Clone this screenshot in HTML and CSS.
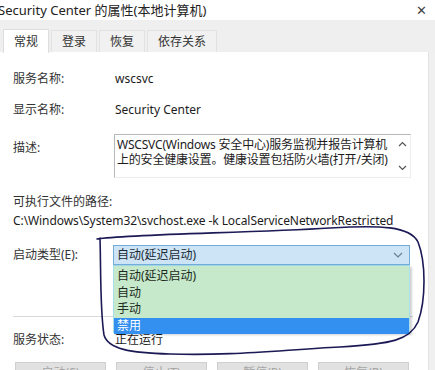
FILE: index.html
```html
<!DOCTYPE html>
<html lang="zh-CN">
<head>
<meta charset="utf-8">
<title>Security Center 的属性</title>
<link rel="stylesheet" href="styles.css">
</head>
<body>
<div class="window">
  <div class="titlebar">
    <span class="title">Security Center 的属性(本地计算机)</span>
    <span class="close">✕</span>
  </div>
  <div class="tabstrip">
    <div class="tab active">常规</div>
    <div class="tab">登录</div>
    <div class="tab">恢复</div>
    <div class="tab">依存关系</div>
  </div>
  <div class="panel">
    <div class="row r1"><span class="label">服务名称:</span><span class="value">wscsvc</span></div>
    <div class="row r2"><span class="label">显示名称:</span><span class="value">Security Center</span></div>
    <div class="row desc-row">
      <span class="label desc-label">描述:</span>
      <div class="descbox">
        <div class="desc-text">WSCSVC(Windows 安全中心)服务监视并报告计算机<br>上的安全健康设置。健康设置包括防火墙(打开/关闭)</div>
        <div class="scroll">
          <svg width="9" height="6" viewBox="0 0 9 6"><path d="M1 5 L4.5 1.5 L8 5" fill="none" stroke="#555" stroke-width="1.2"/></svg>
          <svg width="9" height="6" viewBox="0 0 9 6"><path d="M1 1 L4.5 4.5 L8 1" fill="none" stroke="#555" stroke-width="1.2"/></svg>
        </div>
      </div>
    </div>
    <div class="path-label">可执行文件的路径:</div>
    <div class="path">C:\Windows\System32\svchost.exe -k LocalServiceNetworkRestricted</div>
    <div class="row startup">
      <span class="label">启动类型(E):</span>
      <div class="combo-wrap">
        <div class="combo">
          <span>自动(延迟启动)</span>
          <svg width="10" height="6" viewBox="0 0 10 6"><path d="M1 1 L5 5 L9 1" fill="none" stroke="#6b7f8f" stroke-width="1.2"/></svg>
        </div>
        <ul class="dropdown">
          <li>自动(延迟启动)</li>
          <li>自动</li>
          <li>手动</li>
          <li class="sel">禁用</li>
        </ul>
      </div>
    </div>
    <div class="sep"></div>
    <div class="row status"><span class="label">服务状态:</span><span class="value">正在运行</span></div>
    <div class="buttons">
      <div class="btn">启动(S)</div>
      <div class="btn">停止(T)</div>
      <div class="btn">暂停(P)</div>
      <div class="btn">恢复(R)</div>
    </div>
  </div>
  <svg class="ink" width="435" height="370" viewBox="0 0 435 370">
    <path d="M97 239 C130 234, 250 233, 330 228 C380 225, 410 226, 418 242 C426 262, 426 300, 418 322 C410 340, 392 344, 340 347 C280 350, 230 356, 170 354 C130 353, 108 349, 104 335 C100 310, 101 272, 100 238" fill="none" stroke="#1b1a55" stroke-width="1.6" stroke-linecap="round"/>
  </svg>
</div>
</body>
</html>
```

FILE: styles.css
```css
html, body {
  margin: 0;
  padding: 0;
  background: #ffffff;
}
body {
  width: 435px;
  height: 370px;
  overflow: hidden;
  font-family: "Noto Sans", "Noto Sans CJK SC", sans-serif;
  font-size: 12px;
  color: #1c1c1c;
}
.window {
  position: relative;
  width: 435px;
  height: 370px;
  overflow: hidden;
  background: #f0f0f0;
}
.titlebar {
  height: 20px;
  background: #ffffff;
  display: flex;
  align-items: center;
  justify-content: space-between;
}
.title {
  margin-left: -2px;
  font-size: 13px;
  color: #222;
  line-height: 20px;
}
.close {
  margin-right: 8px;
  font-size: 13px;
  color: #444;
  font-family: "DejaVu Sans", sans-serif;
}
.tabstrip {
  height: 32px;
  background: #efefef;
  display: flex;
  align-items: flex-end;
  padding-left: 3px;
  box-sizing: border-box;
}
.tab {
  height: 21px;
  line-height: 21px;
  padding: 0 10px;
  margin-right: 2px;
  font-size: 12px;
  color: #333;
  border: 1px solid #e2e2e2;
  border-bottom: none;
  background: #f1f1f1;
}
.tab.active {
  height: 23px;
  line-height: 23px;
  background: #ffffff;
  border-color: #dedede;
  margin-bottom: -1px;
}
.panel {
  background: #ffffff;
  height: 318px;
  width: 429px;
  border-right: 1px solid #e3e3e3;
  box-sizing: border-box;
  padding: 19px 0 0 13px;
}
.row {
  display: flex;
  align-items: center;
  line-height: 16px;
}
.label {
  width: 102px;
  flex: none;
  color: #333;
}
.value {
  color: #1c1c1c;
}
.r2 {
  margin-top: 15px;
}
.desc-row {
  margin-top: 16px;
  align-items: flex-start;
}
.desc-label {
  margin-top: 6px;
}
.descbox {
  margin-left: -1px;
  width: 297px;
  height: 44px;
  box-sizing: border-box;
  border: 1px solid #b8b8b8;
  border-right-color: #ececec;
  border-bottom-color: #ececec;
  display: flex;
}
.desc-text {
  flex: 1;
  padding: 2px 0 0 2px;
  line-height: 15px;
  letter-spacing: -0.2px;
}
.scroll {
  width: 16px;
  display: flex;
  flex-direction: column;
  justify-content: space-between;
  align-items: center;
  padding: 6px 0 6px;
}
.path-label {
  margin-top: 16px;
  line-height: 16px;
  color: #333;
}
.path {
  margin-top: 3px;
  line-height: 16px;
  font-size: 12px;
  letter-spacing: -0.08px;
}
.startup {
  margin-top: 16px;
}
.combo-wrap {
  position: relative;
  margin-left: -2px;
}
.combo {
  width: 297px;
  height: 20px;
  box-sizing: border-box;
  background: #cce4f6;
  border: 1px solid #73acd8;
  display: flex;
  align-items: center;
  justify-content: space-between;
  padding: 0 6px 0 3px;
  color: #1c2a33;
}
.dropdown {
  position: absolute;
  top: 20px;
  left: 0;
  width: 297px;
  height: 68px;
  box-sizing: border-box;
  margin: 0;
  padding: 2px 0 0 0;
  list-style: none;
  background: #c6e9cc;
  border: 1px solid #a9dfe8;
  border-top-color: #9fd6e6;
  box-shadow: 2px 2px 2px rgba(0,0,0,0.18);
  z-index: 2;
}
.dropdown li {
  height: 16.5px;
  line-height: 16.5px;
  padding-left: 3px;
  color: #1d2b20;
}
.dropdown li.sel {
  background: #3390f0;
  color: #ffffff;
}
.sep {
  margin-top: 51px;
  height: 1px;
  background: #d8d8d8;
  width: 400px;
}
.status {
  margin-top: 15px;
}
.buttons {
  display: flex;
  gap: 10px;
  margin-top: 14px;
  margin-left: 2px;
}
.btn {
  width: 91px;
  height: 22px;
  box-sizing: border-box;
  background: #e1e1e1;
  border: 1px solid #cfcfcf;
  text-align: center;
  line-height: 20px;
  color: #a5a5a5;
}
.ink {
  position: absolute;
  left: 0;
  top: 0;
  pointer-events: none;
  z-index: 5;
}
```
